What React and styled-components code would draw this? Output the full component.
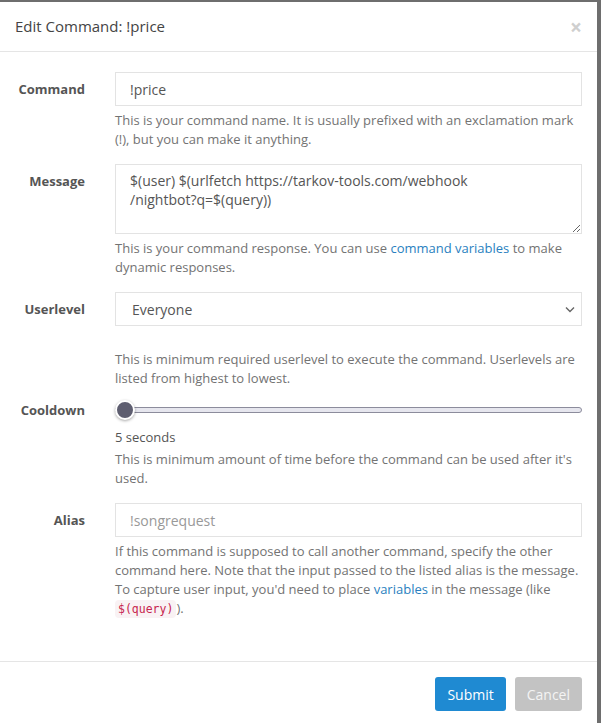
import React from "react";
import styled, { createGlobalStyle } from "styled-components";

const Global = createGlobalStyle`
    html, body {
        margin: 0;
        padding: 0;
        background: #6e6e6e;
        font-family: "Open Sans", "Liberation Sans", sans-serif;
        overflow: hidden;
    }
    * { box-sizing: border-box; }
`

const Modal = styled.div`
    width: 597px;
    margin-top: 2px;
    background: #fff;
    height: 721px;
    display: flex;
    flex-direction: column;
`

const Header = styled.div`
    display: flex;
    align-items: center;
    justify-content: space-between;
    padding: 14px 15px 14px 15px;
    border-bottom: 1px solid #e5e5e5;
`

const Title = styled.h4`
    margin: 0;
    font-size: 15px;
    line-height: 21px;
    font-weight: 500;
    color: #444;
`

const Close = styled.span`
    font-size: 21px;
    line-height: 20px;
    font-weight: 700;
    color: #cfcfcf;
`

const Body = styled.div`
    padding: 20px 15px 27px 15px;
`

const Row = styled.div`
    display: grid;
    grid-template-columns: 70px 1fr;
    column-gap: 30px;
    margin-bottom: ${p => p.$gap || 15}px;
    align-items: start;
`

const Label = styled.label`
    text-align: right;
    font-size: 13px;
    font-weight: 700;
    color: #555;
    line-height: 20px;
    padding-top: ${p => p.$top ?? 7}px;
`

const Control = styled.div`
    display: flex;
    flex-direction: column;
`

const Input = styled.input`
    height: 34px;
    border: 1px solid #e3e3e3;
    padding: 6px 14px;
    font-family: inherit;
    font-size: 14px;
    color: #555;
    outline: none;
    &::placeholder { color: #999; }
`

const TextArea = styled.textarea`
    height: 70px;
    border: 1px solid #e3e3e3;
    padding: 6px 14px;
    font-family: inherit;
    font-size: 14px;
    line-height: 19px;
    color: #555;
    resize: vertical;
    outline: none;
`

const SelectBox = styled.div`
    position: relative;
    height: 34px;
    border: 1px solid #e3e3e3;
    display: flex;
    align-items: center;
    padding: 0 16px;
    font-size: 14px;
    color: #555;
`

const Chevron = styled.svg`
    position: absolute;
    right: 6px;
    top: 13px;
`

const Help = styled.p`
    margin: ${p => p.$top || 5}px 0 0 0;
    font-size: 13px;
    line-height: 19px;
    color: #737373;
`

const Link = styled.a`
    color: #2a7fc0;
    text-decoration: none;
`

const Code = styled.code`
    font-family: "DejaVu Sans Mono", "Liberation Mono", monospace;
    font-size: 11.5px;
    color: #c7254e;
    background: #f9f2f4;
    padding: 2px 3px;
    border-radius: 4px;
`

const Slider = styled.div`
    position: relative;
    height: 20px;
    display: flex;
    align-items: center;
`

const Track = styled.div`
    width: 100%;
    height: 6px;
    background: #e6e6ee;
    border: 1px solid #8c8c9c;
    border-radius: 3px;
`

const Thumb = styled.div`
    position: absolute;
    left: 0;
    top: 0;
    width: 20px;
    height: 20px;
    border-radius: 50%;
    background: #5e5e70;
    border: 2px solid #fff;
    box-shadow: 0 1px 3px rgba(0,0,0,0.35);
`

const Value = styled.div`
    margin-top: 8px;
    font-size: 13px;
    line-height: 19px;
    color: #555;
`

const Footer = styled.div`
    border-top: 1px solid #e5e5e5;
    padding: 15px;
    display: flex;
    justify-content: flex-end;
    gap: 9px;
`

const Button = styled.button`
    height: 34px;
    padding: 0 12px;
    border: none;
    border-radius: 3px;
    font-family: inherit;
    font-size: 14px;
    color: ${p => p.$muted ? "#f4f4f4" : "#fff"};
    background: ${p => p.$muted ? "#c3c3c3" : "#1f8ad2"};
`

const App = () => {
    return (
        <>
            <Global />
            <Modal>
                <Header>
                    <Title>Edit Command: !price</Title>
                    <Close>×</Close>
                </Header>
                <Body>
                    <Row>
                        <Label>Command</Label>
                        <Control>
                            <Input defaultValue="!price" />
                            <Help>This is your command name. It is usually prefixed with an exclamation mark (!), but you can make it anything.</Help>
                        </Control>
                    </Row>
                    <Row>
                        <Label>Message</Label>
                        <Control>
                            <TextArea defaultValue={"$(user) $(urlfetch https://tarkov-tools.com/webhook\n/nightbot?q=$(query))"} />
                            <Help>This is your command response. You can use <Link>command variables</Link> to make dynamic responses.</Help>
                        </Control>
                    </Row>
                    <Row $gap={12}>
                        <Label>Userlevel</Label>
                        <Control>
                            <SelectBox>
                                Everyone
                                <Chevron width="10" height="7" viewBox="0 0 10 7">
                                    <path d="M1 1.5 L5 5.5 L9 1.5" fill="none" stroke="#666" strokeWidth="1.4" />
                                </Chevron>
                            </SelectBox>
                            <Help $top={24}>This is minimum required userlevel to execute the command. Userlevels are listed from highest to lowest.</Help>
                        </Control>
                    </Row>
                    <Row>
                        <Label $top={0}>Cooldown</Label>
                        <Control>
                            <Slider>
                                <Track />
                                <Thumb />
                            </Slider>
                            <Value>5 seconds</Value>
                            <Help $top={3}>This is minimum amount of time before the command can be used after it's used.</Help>
                        </Control>
                    </Row>
                    <Row>
                        <Label>Alias</Label>
                        <Control>
                            <Input placeholder="!songrequest" />
                            <Help>If this command is supposed to call another command, specify the other command here. Note that the input passed to the listed alias is the message. To capture user input, you'd need to place <Link>variables</Link> in the message (like <Code>$(query)</Code>).</Help>
                        </Control>
                    </Row>
                </Body>
                <Footer>
                    <Button>Submit</Button>
                    <Button $muted>Cancel</Button>
                </Footer>
            </Modal>
        </>
    )
}

export default App;
